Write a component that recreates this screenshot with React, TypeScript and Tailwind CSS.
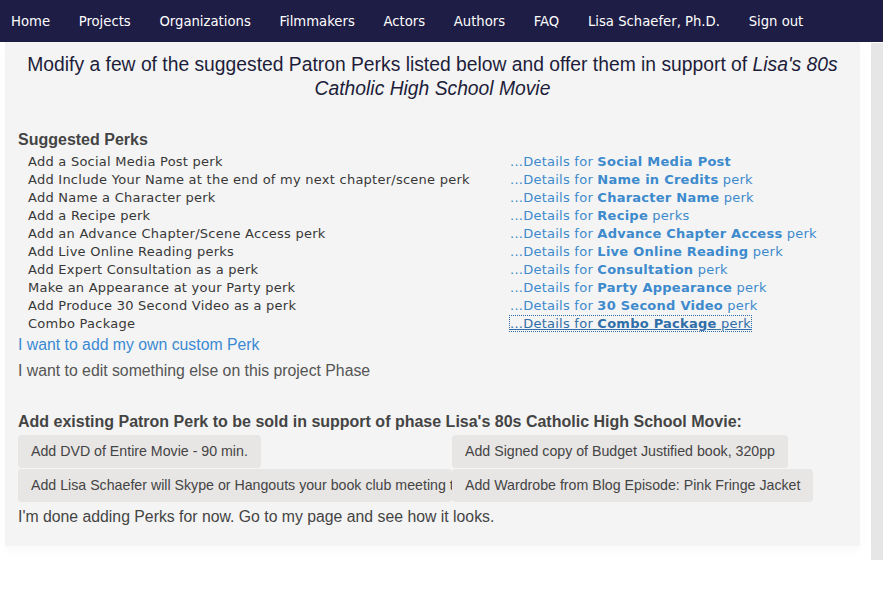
import React from "react";

const navItems = [
  "Home",
  "Projects",
  "Organizations",
  "Filmmakers",
  "Actors",
  "Authors",
  "FAQ",
  "Lisa Schaefer, Ph.D.",
  "Sign out",
];

type Perk = { add: string; name: string; suffix: string };

const perks: Perk[] = [
  { add: "Add a Social Media Post perk", name: "Social Media Post", suffix: "" },
  { add: "Add Include Your Name at the end of my next chapter/scene perk", name: "Name in Credits", suffix: " perk" },
  { add: "Add Name a Character perk", name: "Character Name", suffix: " perk" },
  { add: "Add a Recipe perk", name: "Recipe", suffix: " perks" },
  { add: "Add an Advance Chapter/Scene Access perk", name: "Advance Chapter Access", suffix: " perk" },
  { add: "Add Live Online Reading perks", name: "Live Online Reading", suffix: " perk" },
  { add: "Add Expert Consultation as a perk", name: "Consultation", suffix: " perk" },
  { add: "Make an Appearance at your Party perk", name: "Party Appearance", suffix: " perk" },
  { add: "Add Produce 30 Second Video as a perk", name: "30 Second Video", suffix: " perk" },
  { add: "Combo Package", name: "Combo Package", suffix: " perk" },
];

const existing = [
  "Add DVD of Entire Movie - 90 min.",
  "Add Signed copy of Budget Justified book, 320pp",
  "Add Lisa Schaefer will Skype or Hangouts your book club meeting to discuss the book",
  "Add Wardrobe from Blog Episode: Pink Fringe Jacket",
];

const App: React.FC = () => {
  return (
    <div className="min-h-[609px] w-[883px] bg-white font-['Liberation_Sans',Arial,sans-serif]">
      {/* top nav */}
      <nav className="flex h-[42px] items-center bg-[#1e1d45] pl-[11px] font-['DejaVu_Sans_Condensed','DejaVu_Sans',sans-serif] text-[14.7px] text-white">
        {navItems.map((item) => (
          <a key={item} className="mr-[28.7px] cursor-pointer">
            {item}
          </a>
        ))}
      </nav>

      <div className="flex items-start">
        <div className="ml-[5px] w-[855px] bg-[#f4f4f4] px-[13px] pt-[11px] pb-[19px] shadow-[0_6px_10px_rgba(0,0,0,0.025)]">
          <h1 className="text-center text-[19.3px] leading-[24px] text-[#1d1d3a]">
            Modify a few of the suggested Patron Perks listed below and offer them in support of{" "}
            <i>Lisa's 80s Catholic High School Movie</i>
          </h1>

          <h3 className="mt-[29px] text-[16px] leading-[20px] font-bold text-[#444]">Suggested Perks</h3>

          {/* suggested perks table */}
          <div className="mt-[3px] font-['DejaVu_Sans',Verdana,sans-serif] text-[13px] tracking-[0.25px]">
            {perks.map((p, i) => (
              <div key={p.add} className="grid h-[18px] grid-cols-[492px_1fr] items-center leading-[18px]">
                <span className="pl-[10px] text-[#383838]">{p.add}</span>
                <span>
                  <a
                    className={
                      i === perks.length - 1
                        ? "cursor-pointer text-[#2f6ea8] underline outline-1 outline-dotted outline-[#2f6ea8]"
                        : "cursor-pointer text-[#3d8acd]"
                    }
                  >
                    ...Details for <b>{p.name}</b>
                    {p.suffix}
                  </a>
                </span>
              </div>
            ))}
          </div>

          <a className="mt-[2px] block h-[26px] cursor-pointer text-[15.8px] leading-[20px] text-[#3a8ad3]">
            I want to add my own custom Perk
          </a>
          <p className="h-[26px] text-[15.8px] leading-[20px] text-[#555]">
            I want to edit something else on this project Phase
          </p>

          <h3 className="mt-[25px] text-[16px] leading-[20px] font-bold text-[#444]">
            Add existing Patron Perk to be sold in support of phase Lisa's 80s Catholic High School Movie:
          </h3>

          <div className="mt-[3px] grid grid-cols-[434px_434px] gap-y-px">
            {existing.map((e) => (
              <div key={e} className="overflow-hidden">
                <button className="h-[33px] max-w-full overflow-hidden rounded-[4px] bg-[#e8e6e5] px-[13px] text-left text-[14.2px] whitespace-nowrap text-[#444]">
                  {e}
                </button>
              </div>
            ))}
          </div>

          <p className="mt-[5px] text-[15.8px] leading-[20px] text-[#444]">
            I'm done adding Perks for now. Go to my page and see how it looks.
          </p>
        </div>
        <div className="mt-px ml-[11px] h-[517px] w-[12px] bg-[#e6e6e6]" />
      </div>
    </div>
  );
};

export default App;
